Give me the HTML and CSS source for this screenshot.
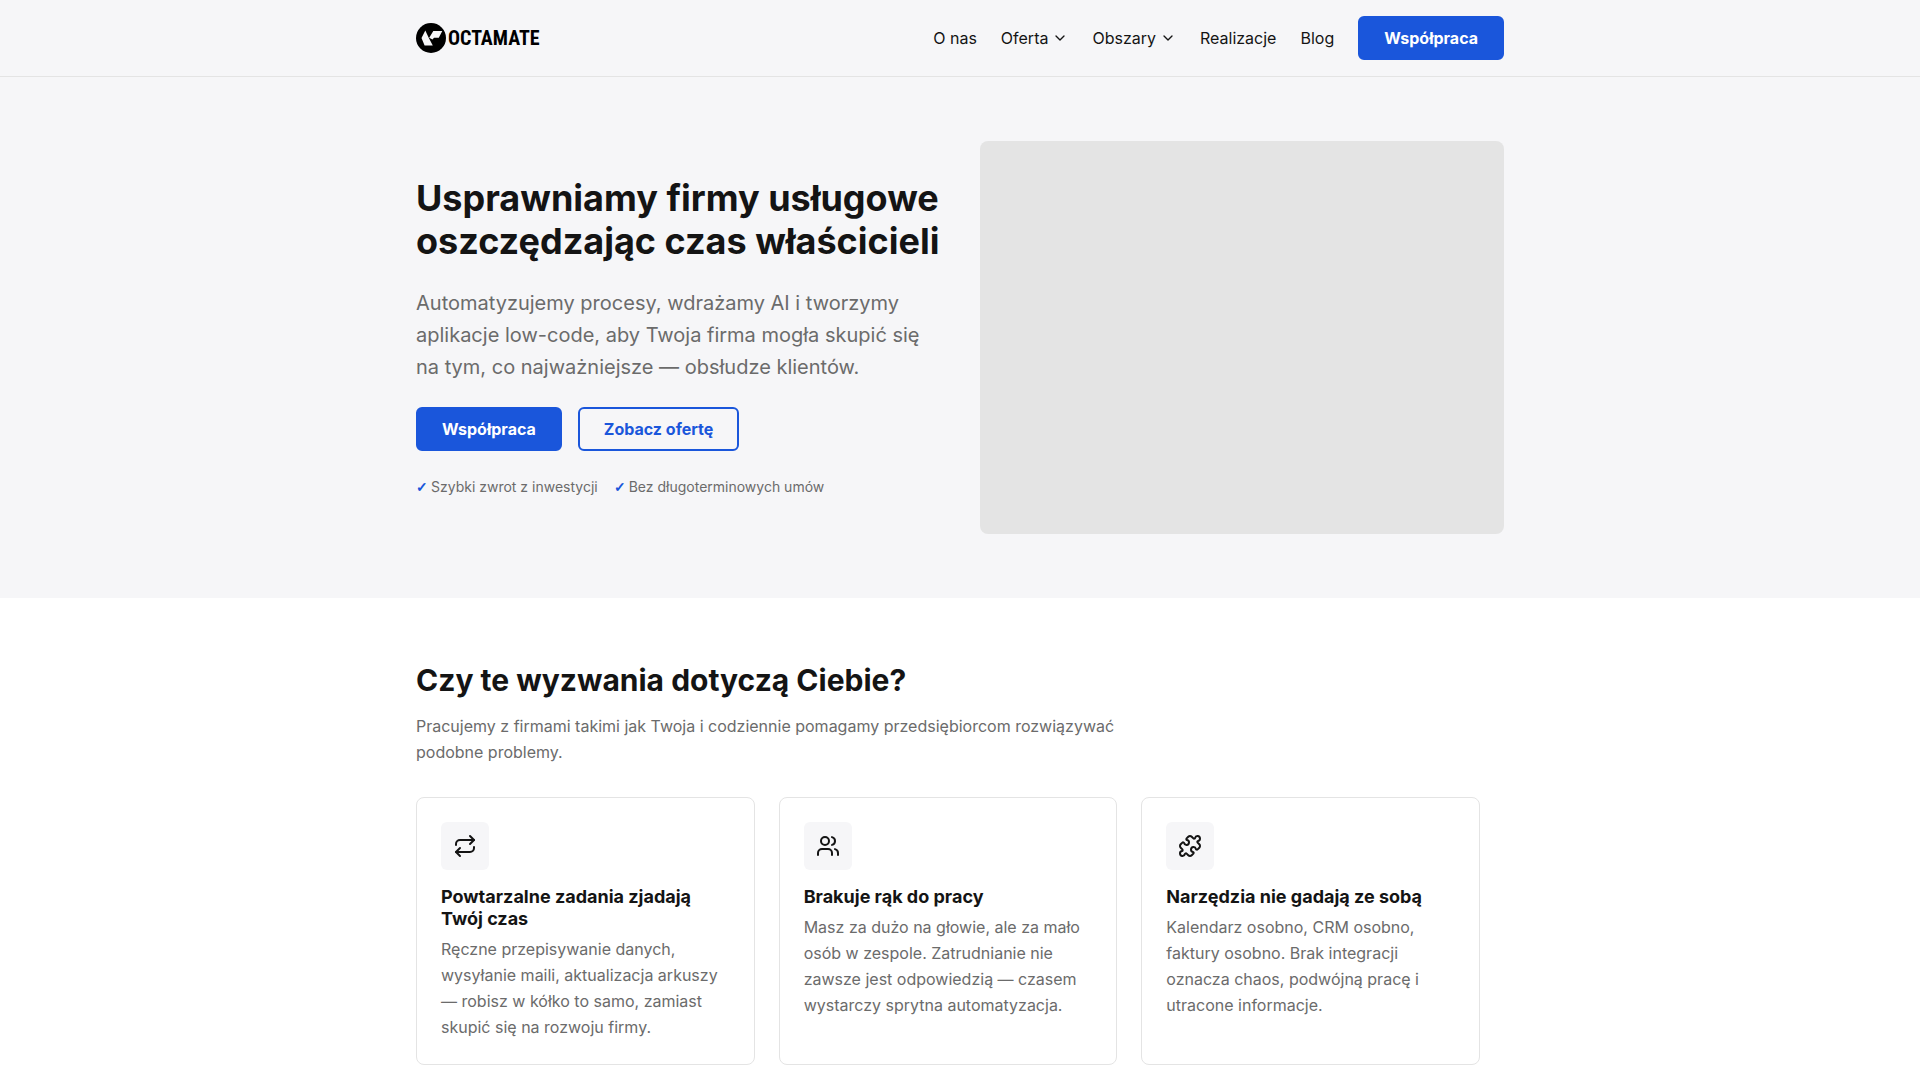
FILE: index.html
```html
<!DOCTYPE html>
<html lang="pl">
<head>
  <meta charset="UTF-8">
  <meta name="viewport" content="width=device-width, initial-scale=1.0">
  <title>Octamate</title>
  <link rel="stylesheet" href="styles.css">
</head>
<body>

  <header class="header">
    <div class="container header-inner">
      <a href="#" class="logo">
        <svg class="logo-mark" viewBox="0 0 30 30" aria-hidden="true">
          <circle cx="15" cy="15" r="15" fill="#000"/>
          <path d="M9.3 7.5 L5.5 15 L8.6 22.5 H16.8 L12.6 14.6 Z" fill="#f6f6f8"/>
          <path d="M17.3 8 H26.3 L22.8 14.8 H18 L16.5 16.5 L13.2 14.8 Z" fill="#f6f6f8"/>
        </svg>
        <span class="logo-text">OCTAMATE</span>
      </a>

      <nav class="nav">
        <a href="#">O nas</a>
        <a href="#">Oferta
          <svg class="chevron" viewBox="0 0 24 24" aria-hidden="true"><path d="m6 9 6 6 6-6"/></svg>
        </a>
        <a href="#">Obszary
          <svg class="chevron" viewBox="0 0 24 24" aria-hidden="true"><path d="m6 9 6 6 6-6"/></svg>
        </a>
        <a href="#">Realizacje</a>
        <a href="#">Blog</a>
        <a href="#" class="btn btn-primary">Współpraca</a>
      </nav>
    </div>
  </header>

  <main>
    <section class="hero">
      <div class="container hero-grid">
        <div class="hero-content">
          <h1>Usprawniamy firmy usługowe oszczędzając czas właścicieli</h1>
          <p class="hero-text">Automatyzujemy procesy, wdrażamy AI i tworzymy aplikacje low-code, aby Twoja firma mogła skupić się na tym, co najważniejsze — obsłudze klientów.</p>
          <div class="hero-buttons">
            <a href="#" class="btn btn-primary">Współpraca</a>
            <a href="#" class="btn btn-outline">Zobacz ofertę</a>
          </div>
          <ul class="hero-checks">
            <li>Szybki zwrot z inwestycji</li>
            <li>Bez długoterminowych umów</li>
          </ul>
        </div>
        <div class="hero-media"></div>
      </div>
    </section>

    <section class="problems">
      <div class="container">
        <h2>Czy te wyzwania dotyczą Ciebie?</h2>
        <p class="section-text">Pracujemy z firmami takimi jak Twoja i codziennie pomagamy przedsiębiorcom rozwiązywać podobne problemy.</p>

        <div class="cards">
          <article class="card">
            <div class="card-icon">
              <svg viewBox="0 0 24 24" aria-hidden="true">
                <path d="m17 2 4 4-4 4"/>
                <path d="M3 11v-1a4 4 0 0 1 4-4h14"/>
                <path d="m7 22-4-4 4-4"/>
                <path d="M21 13v1a4 4 0 0 1-4 4H3"/>
              </svg>
            </div>
            <h3>Powtarzalne zadania zjadają Twój czas</h3>
            <p>Ręczne przepisywanie danych, wysyłanie maili, aktualizacja arkuszy — robisz w kółko to samo, zamiast skupić się na rozwoju firmy.</p>
          </article>

          <article class="card">
            <div class="card-icon">
              <svg viewBox="0 0 24 24" aria-hidden="true">
                <path d="M16 21v-2a4 4 0 0 0-4-4H6a4 4 0 0 0-4 4v2"/>
                <circle cx="9" cy="7" r="4"/>
                <path d="M22 21v-2a4 4 0 0 0-3-3.87"/>
                <path d="M16 3.13a4 4 0 0 1 0 7.75"/>
              </svg>
            </div>
            <h3>Brakuje rąk do pracy</h3>
            <p>Masz za dużo na głowie, ale za mało osób w zespole. Zatrudnianie nie zawsze jest odpowiedzią — czasem wystarczy sprytna automatyzacja.</p>
          </article>

          <article class="card">
            <div class="card-icon">
              <svg viewBox="0 0 24 24" aria-hidden="true">
                <path d="M15.39 4.39a1 1 0 0 0 1.68-.474 2.5 2.5 0 1 1 3.014 3.015 1 1 0 0 0-.474 1.68l1.683 1.682a2.414 2.414 0 0 1 0 3.414L19.61 15.39a1 1 0 0 1-1.68-.474 2.5 2.5 0 1 0-3.014 3.015 1 1 0 0 1 .474 1.68l-1.683 1.682a2.414 2.414 0 0 1-3.414 0L8.61 19.61a1 1 0 0 0-1.68.474 2.5 2.5 0 1 1-3.014-3.015 1 1 0 0 0 .474-1.68l-1.683-1.682a2.414 2.414 0 0 1 0-3.414L4.39 8.61a1 1 0 0 1 1.68.474 2.5 2.5 0 1 0 3.014-3.015 1 1 0 0 1-.474-1.68l1.683-1.682a2.414 2.414 0 0 1 3.414 0z"/>
              </svg>
            </div>
            <h3>Narzędzia nie gadają ze sobą</h3>
            <p>Kalendarz osobno, CRM osobno, faktury osobno. Brak integracji oznacza chaos, podwójną pracę i utracone informacje.</p>
          </article>
        </div>
      </div>
    </section>
  </main>

</body>
</html>
```
FILE: styles.css
```css
* {
  margin: 0;
  padding: 0;
  box-sizing: border-box;
}

body {
  font-family: "Inter", sans-serif;
  font-size: 16px;
  line-height: 26px;
  color: #141414;
  background: #fff;
}

a {
  color: inherit;
  text-decoration: none;
}

.container {
  max-width: 1136px;
  margin: 0 auto;
  padding: 0 24px;
}

/* Header */
.header {
  background: #f6f6f8;
  border-bottom: 1px solid #e4e4e4;
}

.header-inner {
  display: flex;
  justify-content: space-between;
  align-items: center;
  padding-top: 16px;
  padding-bottom: 16px;
}

.logo {
  display: flex;
  align-items: center;
  gap: 2px;
  color: #000;
}

.logo-mark {
  width: 30px;
  height: 30px;
}

.logo-text {
  font-family: "Liberation Sans Narrow", "Roboto Condensed", sans-serif;
  font-size: 20px;
  font-weight: 700;
}

.nav {
  display: flex;
  align-items: center;
  gap: 24px;
}

.nav a {
  display: flex;
  align-items: center;
  gap: 4px;
}

.chevron {
  width: 16px;
  height: 16px;
  fill: none;
  stroke: currentColor;
  stroke-width: 2;
  stroke-linecap: round;
  stroke-linejoin: round;
}

/* Buttons */
.btn {
  display: inline-block;
  padding: 10px 24px;
  border: 2px solid #1a56db;
  border-radius: 6px;
  font-weight: 700;
  line-height: 20px;
}

.btn-primary {
  background: #1a56db;
  color: #fff;
}

.btn-outline {
  color: #1a56db;
}

/* Hero */
.hero {
  background: #f6f6f8;
  padding: 64px 0;
}

.hero-grid {
  display: grid;
  grid-template-columns: 1fr 1fr;
  gap: 40px;
  align-items: center;
}

h1 {
  font-size: 36px;
  line-height: 43px;
  margin-bottom: 24px;
}

.hero-text {
  font-size: 20px;
  line-height: 32px;
  color: #6b6b6b;
  margin-bottom: 24px;
}

.hero-buttons {
  display: flex;
  gap: 16px;
  margin-bottom: 24px;
}

.hero-checks {
  display: flex;
  gap: 16px;
  list-style: none;
  font-size: 14px;
  line-height: 24px;
  color: #6b6b6b;
}

.hero-checks li {
  display: flex;
  gap: 3px;
}

.hero-checks li::before {
  content: "✓";
  font-family: "Liberation Sans", sans-serif;
  color: #1a56db;
  font-weight: 700;
}

.hero-media {
  aspect-ratio: 4 / 3;
  background: #e4e4e4;
  border-radius: 8px;
}

/* Problems */
.problems {
  padding: 64px 0;
}

h2 {
  font-size: 30px;
  line-height: 36px;
  margin-bottom: 15px;
}

.section-text {
  max-width: 700px;
  color: #6b6b6b;
  margin-bottom: 32px;
}

.cards {
  display: grid;
  grid-template-columns: repeat(3, 1fr);
  gap: 24px;
  padding-right: 24px;
}

.card {
  padding: 24px;
  border: 1px solid #e4e4e4;
  border-radius: 8px;
}

.card-icon {
  display: flex;
  align-items: center;
  justify-content: center;
  width: 48px;
  height: 48px;
  margin-bottom: 16px;
  background: #f6f6f8;
  border-radius: 6px;
}

.card-icon svg {
  width: 24px;
  height: 24px;
  fill: none;
  stroke: currentColor;
  stroke-width: 2;
  stroke-linecap: round;
  stroke-linejoin: round;
}

.card h3 {
  font-size: 18px;
  line-height: 22px;
  margin-bottom: 6px;
}

.card p {
  color: #6b6b6b;
}
```
